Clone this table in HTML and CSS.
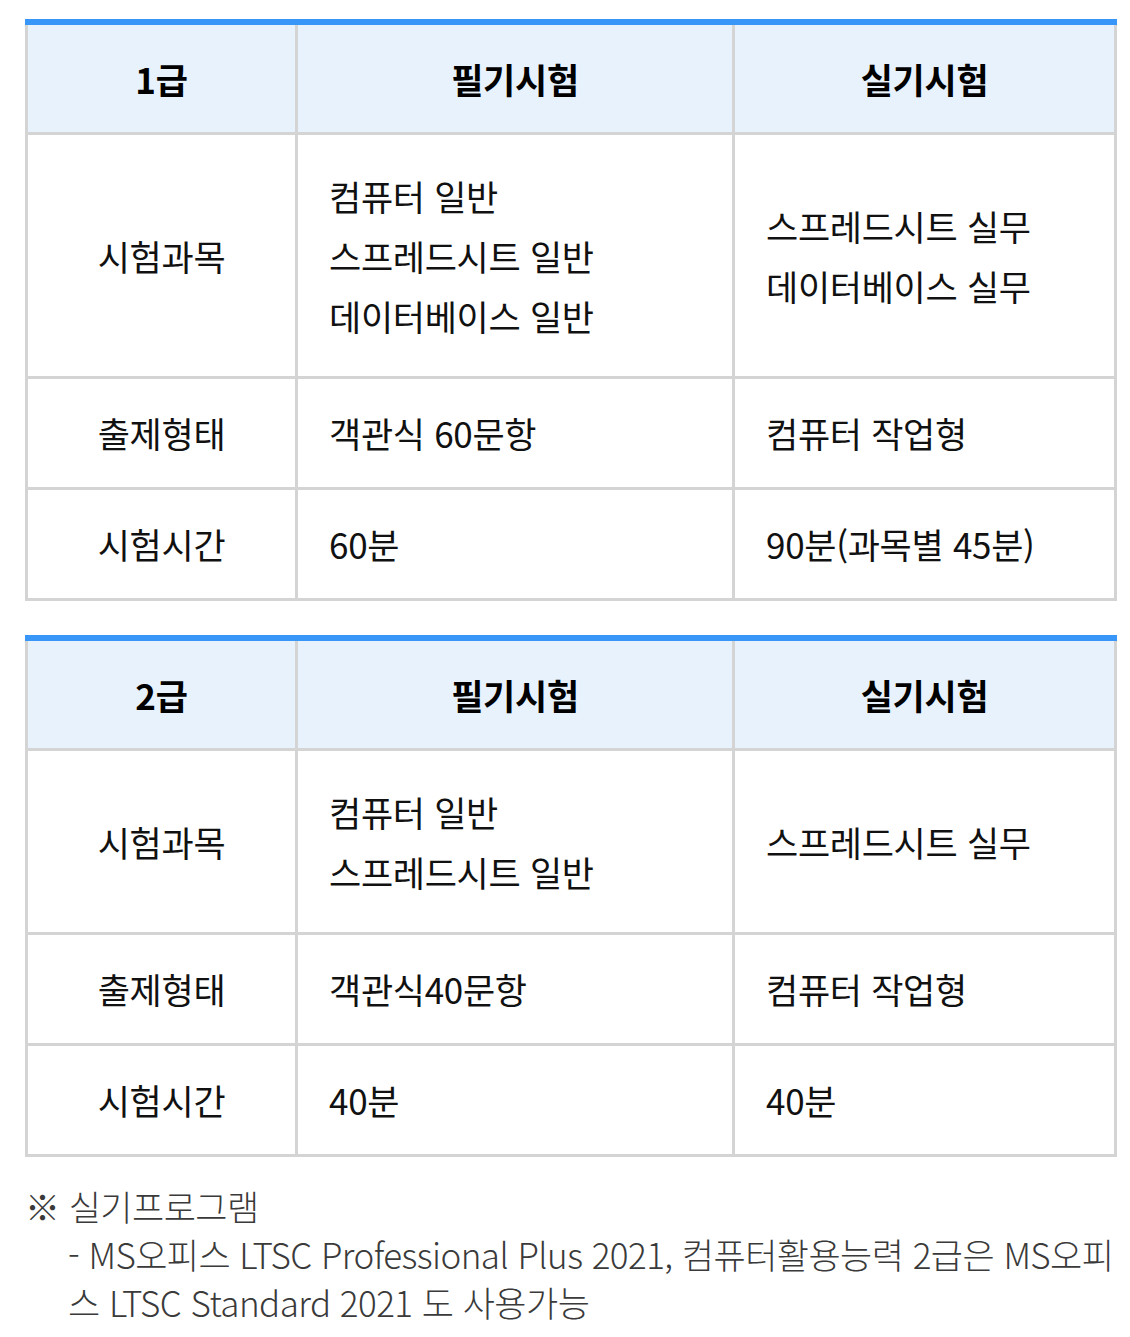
FILE: index.html
```html
<!DOCTYPE html>
<html lang="ko">
<head>
<meta charset="utf-8">
<link rel="stylesheet" href="styles.css">
</head>
<body>
<div class="page">
  <table class="exam">
    <colgroup><col class="c1"><col class="c2"><col class="c3"></colgroup>
    <thead>
      <tr><th>1급</th><th>필기시험</th><th>실기시험</th></tr>
    </thead>
    <tbody>
      <tr class="h3">
        <td class="label">시험과목</td>
        <td>컴퓨터 일반<br>스프레드시트 일반<br>데이터베이스 일반</td>
        <td>스프레드시트 실무<br>데이터베이스 실무</td>
      </tr>
      <tr>
        <td class="label">출제형태</td>
        <td>객관식 60문항</td>
        <td>컴퓨터 작업형</td>
      </tr>
      <tr>
        <td class="label">시험시간</td>
        <td>60분</td>
        <td>90분(과목별 45분)</td>
      </tr>
    </tbody>
  </table>

  <table class="exam">
    <colgroup><col class="c1"><col class="c2"><col class="c3"></colgroup>
    <thead>
      <tr><th>2급</th><th>필기시험</th><th>실기시험</th></tr>
    </thead>
    <tbody>
      <tr class="h2">
        <td class="label">시험과목</td>
        <td>컴퓨터 일반<br>스프레드시트 일반</td>
        <td>스프레드시트 실무</td>
      </tr>
      <tr>
        <td class="label">출제형태</td>
        <td>객관식40문항</td>
        <td>컴퓨터 작업형</td>
      </tr>
      <tr>
        <td class="label">시험시간</td>
        <td>40분</td>
        <td>40분</td>
      </tr>
    </tbody>
  </table>

  <div class="note">
    <p class="note-title">※ 실기프로그램</p>
    <p class="note-body">- MS오피스 LTSC Professional Plus 2021, 컴퓨터활용능력 2급은 MS오피스 LTSC Standard 2021 도 사용가능</p>
  </div>
</div>
</body>
</html>
```
FILE: styles.css
```css
html, body {
  margin: 0;
  padding: 0;
  background: #ffffff;
}
body {
  font-family: "Noto Sans CJK KR", "Noto Sans", sans-serif;
  color: #111111;
}
.page {
  padding: 19px 14px 0 25px;
}
.exam {
  width: 1089px;
  border-collapse: collapse;
  table-layout: fixed;
  margin: 0 0 34px 0;
}
.exam col.c1 { width: 270px; }
.exam col.c2 { width: 437px; }
.exam col.c3 { width: 382px; }
.exam th, .exam td {
  border: 3px solid #d4d4d4;
  font-size: 35px;
  line-height: 60px;
  vertical-align: middle;
  padding: 0 0 0 31px;
  height: 108px;
  text-align: left;
  letter-spacing: -0.3px;
}
.exam thead th {
  border-top: 6px solid #3796f8;
  background: #e8f2fd;
  font-weight: 700;
  text-align: center;
  padding: 0;
  height: 107px;
  color: #000;
}
.exam td.label {
  text-align: center;
  padding: 0;
}
.exam tr.h3 td { height: 241px; }
.exam tr.h2 td { height: 181px; }
.note {
  margin-top: -9px;
  color: #3a3a3a;
  font-size: 35px;
  font-weight: 300;
  letter-spacing: -0.55px;
  line-height: 48px;
}
.note p { margin: 0; }
.note-body {
  padding-left: 43px;
}
```
